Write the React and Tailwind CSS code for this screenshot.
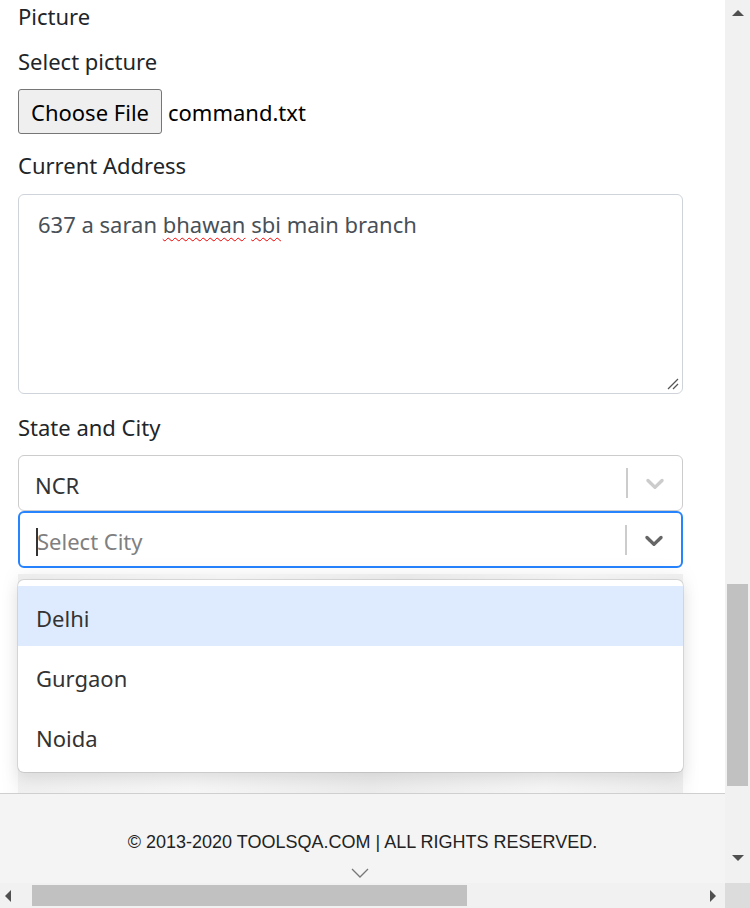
import React from 'react';

const font = { fontFamily: '"Noto Sans", "Open Sans", sans-serif' };

function Chevron({ color }) {
  return (
    <svg width="30" height="30" viewBox="0 0 20 20" fill={color}>
      <path d="M4.516 7.548c0.436-0.446 1.043-0.481 1.576 0l3.908 3.747 3.908-3.747c0.533-0.481 1.141-0.446 1.574 0 0.436 0.445 0.408 1.197 0 1.615-0.406 0.418-4.695 4.502-4.695 4.502-0.217 0.223-0.502 0.335-0.787 0.335s-0.57-0.112-0.789-0.335c0 0-4.287-4.084-4.695-4.502s-0.436-1.17 0-1.615z" />
    </svg>
  );
}

function SelectControl({ focused, children, sepColor, chevColor }) {
  return (
    <div
      className={
        'flex items-center rounded-[6px] bg-white ' +
        (focused ? 'h-[57px] border-2 border-[#2684ff]' : 'h-[56px] border border-[#cccccc]')
      }
    >
      <div className="flex-1 flex items-center pl-[16px] pt-[4px] text-[22px]">{children}</div>
      <div className={'w-[2px] h-[30px] ' + sepColor} />
      <div className="w-[54px] flex items-center justify-center">
        <Chevron color={chevColor} />
      </div>
    </div>
  );
}

function ScrollArrow({ dir }) {
  const pts = {
    up: '0,6 6,0 12,6',
    down: '0,0 12,0 6,6',
    left: '6,0 6,12 0,6',
    right: '0,0 0,12 6,6',
  }[dir];
  const vertical = dir === 'up' || dir === 'down';
  return (
    <svg width={vertical ? 12 : 6} height={vertical ? 6 : 12} viewBox={vertical ? '0 0 12 6' : '0 0 6 12'}>
      <polygon points={pts} fill="#505050" />
    </svg>
  );
}

export default function App() {
  return (
    <div className="w-[750px] h-[908px] overflow-hidden bg-white flex flex-col" style={font}>
      <div className="flex h-[883px]">
        {/* page */}
        <div className="w-[725px] flex flex-col">
          <div className="relative h-[793px] overflow-hidden pl-[18px] pr-[42px] text-[#212529]">
            <div className="pt-[1px] h-[31px] leading-[30px] text-[22px]">Picture</div>
            <div className="mt-[12px] h-[36px] leading-[36px] text-[22px]">Select picture</div>
            <div className="mt-[10px] flex items-center h-[45px]">
              <div className="h-[45px] px-[12px] pt-[1px] flex items-center border border-[#767676] rounded-[3px] bg-[#efefef] text-black text-[22px]">
                Choose File
              </div>
              <span className="ml-[6px] pt-[1px] text-[22px] text-black">command.txt</span>
            </div>
            <div className="mt-[13px] h-[36px] leading-[36px] text-[22px]">Current Address</div>
            <div className="relative mt-[11px] h-[200px] border border-[#ced4da] rounded-[6px] px-[19px] pt-[13px] text-[22px] text-[#495057]">
              637 a saran{' '}
              <span className="underline decoration-wavy decoration-[#e00] decoration-1 underline-offset-4">bhawan</span>{' '}
              <span className="underline decoration-wavy decoration-[#e00] decoration-1 underline-offset-4">sbi</span>{' '}
              main branch
              <svg className="absolute right-[3px] bottom-[3px]" width="12" height="12" viewBox="0 0 12 12">
                <line x1="1" y1="11" x2="11" y2="1" stroke="#555" strokeWidth="1.3" />
                <line x1="6" y1="11" x2="11" y2="6" stroke="#555" strokeWidth="1.3" />
              </svg>
            </div>
            <div className="mt-[15px] h-[36px] leading-[36px] text-[22px]">State and City</div>
            <div className="mt-[10px]">
              <SelectControl sepColor="bg-[#cccccc]" chevColor="#cccccc">
                <span className="text-[#333333]">NCR</span>
              </SelectControl>
              <SelectControl focused sepColor="bg-[#cccccc]" chevColor="#666666">
                <span className="w-[2px] h-[28px] bg-[#333] mr-[-1px]" />
                <span className="text-[#808080]">Select City</span>
              </SelectControl>
            </div>
            {/* content behind the menu */}
            <div className="mt-[6px] h-[230px] bg-[linear-gradient(100deg,#eeeeee,#f6f6f6_30%,#ebebeb_55%,#f5f5f5_80%,#ececec)] shadow-[0_0_20px_rgba(0,0,0,0.06)]" />

            {/* dropdown menu */}
            <div className="absolute left-[18px] top-[580px] w-[665px] rounded-[6px] bg-white py-[6px] shadow-[0_0_0_1px_rgba(0,0,0,0.1),0_6px_16px_rgba(0,0,0,0.1)] text-[22px] text-[#333]">
              <div className="h-[60px] flex items-center px-[18px] pt-[4px] bg-[#deebff]">Delhi</div>
              <div className="h-[60px] flex items-center px-[18px] pt-[4px]">Gurgaon</div>
              <div className="h-[60px] flex items-center px-[18px] pt-[4px]">Noida</div>
            </div>
          </div>
          {/* footer */}
          <div className="h-[90px] bg-[#f4f4f4] border-t border-[#cfcfcf] flex flex-col items-center">
            <div
              className="mt-[35px] text-[18px] text-[#222]"
              style={{ fontFamily: '"Liberation Sans", Arial, sans-serif' }}
            >
              © 2013-2020 TOOLSQA.COM | ALL RIGHTS RESERVED.
            </div>
            <svg className="mt-[12px] -ml-[6px]" width="18" height="10" viewBox="0 0 18 10">
              <polyline points="1,1 9,9 17,1" fill="none" stroke="#777" strokeWidth="1.3" />
            </svg>
          </div>
        </div>
        {/* vertical scrollbar */}
        <div className="w-[25px] bg-[#f1f1f1] flex flex-col items-center">
          <div className="h-[25px] flex items-center justify-center">
            <ScrollArrow dir="up" />
          </div>
          <div className="flex-1 w-full relative">
            <div className="absolute left-[2px] right-[2px] top-[559px] h-[202px] bg-[#c1c1c1]" />
          </div>
          <div className="h-[25px] flex items-center justify-center -mt-[13px] mb-[13px]">
            <ScrollArrow dir="down" />
          </div>
        </div>
      </div>
      {/* horizontal scrollbar */}
      <div className="flex h-[25px]">
        <div className="w-[725px] bg-[#f1f1f1] flex items-center">
          <div className="w-[32px] flex items-center justify-center -ml-[8px]">
            <ScrollArrow dir="left" />
          </div>
          <div className="ml-[8px] w-[435px] h-[21px] bg-[#c1c1c1]" />
          <div className="flex-1" />
          <div className="w-[25px] flex items-center justify-center">
            <ScrollArrow dir="right" />
          </div>
        </div>
        <div className="w-[25px] bg-[#dcdcdc]" />
      </div>
    </div>
  );
}
